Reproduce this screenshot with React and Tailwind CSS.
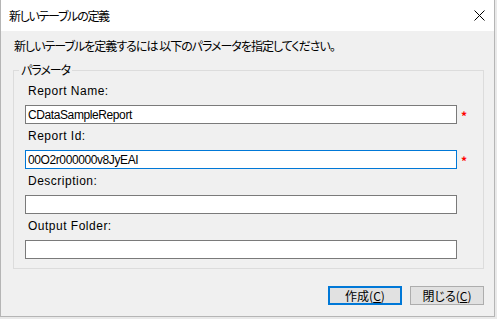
const fields = [
  { label: "Report Name:", value: "CDataSampleReport", required: true, focused: false },
  { label: "Report Id:", value: "00O2r000000v8JyEAI", required: true, focused: true },
  { label: "Description:", value: "", required: false, focused: false },
  { label: "Output Folder:", value: "", required: false, focused: false },
];

const latin = { fontFamily: '"Liberation Sans", "Noto Sans CJK JP", sans-serif' };

const Field = ({ label, value, required, focused }) => (
  <div className="flex flex-col">
    <div className="h-[26px] pb-[2px] pl-[3px] flex items-center tracking-[0.5px]" style={latin}>{label}</div>
    <div className="flex items-center">
      <div
        className={
          focused
            ? "w-[432px] h-[19px] border border-[#0078d7] bg-white pl-[2px] flex items-center tracking-[-0.4px]"
            : "w-[432px] h-[19px] border border-[#7a7a7a] bg-white pl-[2px] flex items-center tracking-[-0.4px]"
        }
        style={latin}
      >
        {value}
      </div>
      {required && <span className="ml-[4px] mt-[2px] text-[#ff0000] font-bold leading-none">*</span>}
    </div>
  </div>
);

const App = () => {
  return (
    <div className="w-[497px] h-[319px] bg-[#e9e9e9] overflow-hidden">
      <div
        className="w-[495px] h-[317px] bg-[#f0f0f0] border border-t-0 border-[#b5b5b5] flex flex-col text-[12px] text-black [font-feature-settings:'palt']"
        style={{ fontFamily: '"Noto Sans CJK JP", "Liberation Sans", sans-serif' }}
      >
        <div className="h-[31px] bg-white flex items-center justify-between pl-[8px] pr-[8px]">
          <span className="tracking-[-1.3px]">新しいテーブルの定義</span>
          <svg width="11" height="11" viewBox="0 0 11 11" className="mr-[1px]">
            <path d="M0.5 0.5 L10.5 10.5 M10.5 0.5 L0.5 10.5" stroke="#000" strokeWidth="1" />
          </svg>
        </div>

        <div className="pl-[13px] pt-[7px] h-[16px] box-content leading-[16px] tracking-[-1px]">
          新しいテーブルを定義するには 以下のパラメータを指定してください。
        </div>

        <fieldset className="ml-[12px] mt-[9px] w-[471px] border border-[#dcdcdc] pl-[11px] pt-[2px] pb-[9px]">
          <legend className="ml-[-6px] px-[2px] leading-[14px] tracking-[-1px]">パラメータ</legend>
          {fields.map((f) => (
            <Field key={f.label} {...f} />
          ))}
        </fieldset>

        <div className="mt-[17px] flex justify-end gap-[8px] pr-[10px]">
          <button className="w-[74px] h-[19px] border-2 border-[#0078d7] bg-[#e1e1e1] flex items-center justify-center leading-none">
            作成(<span className="underline">C</span>)
          </button>
          <button className="w-[74px] h-[19px] border border-[#adadad] bg-[#e1e1e1] flex items-center justify-center leading-none">
            閉じる(<span className="underline">C</span>)
          </button>
        </div>
      </div>
    </div>
  );
};

export default App;
